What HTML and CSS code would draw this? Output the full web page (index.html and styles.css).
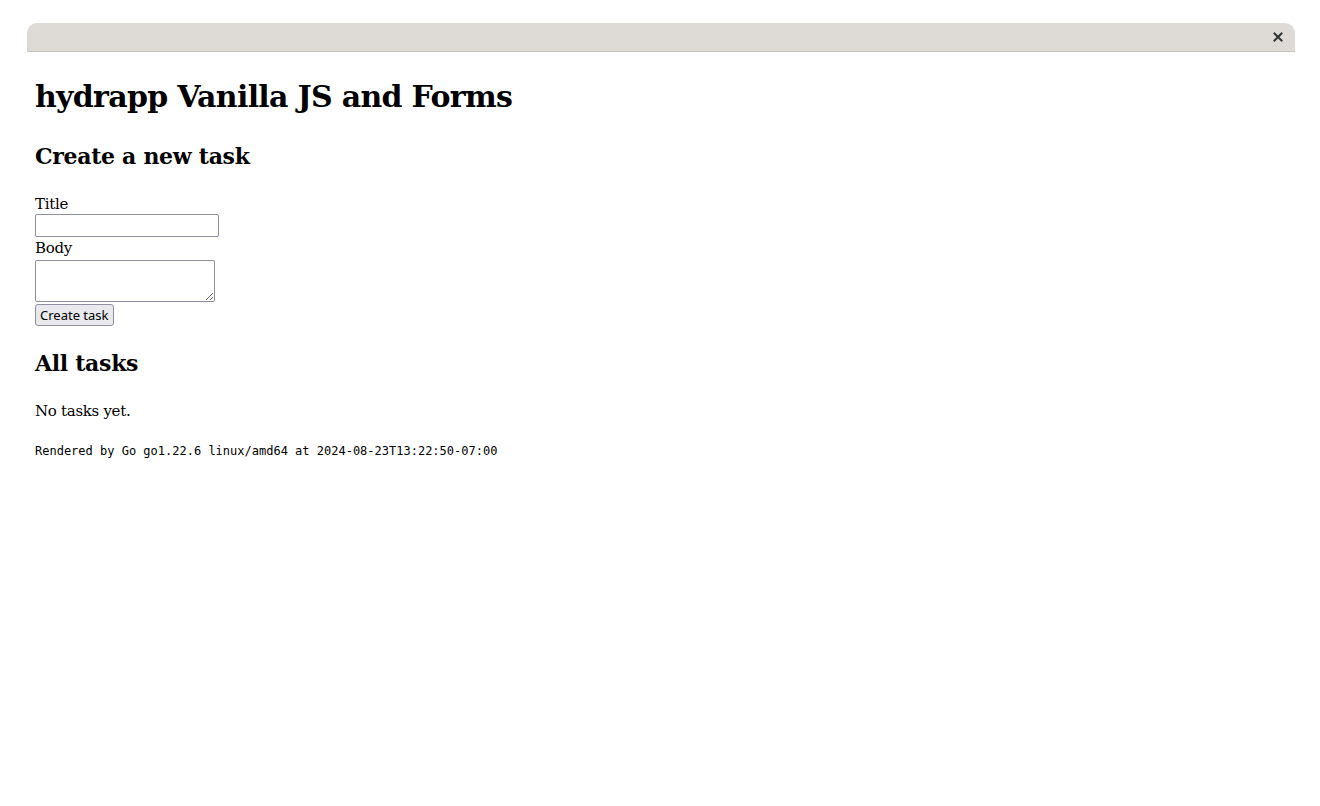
FILE: index.html
```html
<!DOCTYPE html>
<html lang="en">
<head>
<meta charset="utf-8">
<title>hydrapp Vanilla JS and Forms</title>
<link rel="stylesheet" href="styles.css">
</head>
<body>
<div class="window">
  <div class="titlebar">
    <button class="close" aria-label="Close">
      <svg width="10" height="10" viewBox="0 0 10 10"><path d="M1.5 1.5 L8.5 8.5 M8.5 1.5 L1.5 8.5" stroke="#2e3436" stroke-width="2" stroke-linecap="square"/></svg>
    </button>
  </div>
  <main class="content">
    <h1 class="title">hydrapp Vanilla JS and Forms</h1>
    <h2 class="section">Create a new task</h2>
    <form class="task-form">
      <label class="field-label" for="title">Title</label>
      <input class="field-input" id="title" type="text">
      <label class="field-label" for="body">Body</label>
      <textarea class="field-area" id="body"></textarea>
      <button class="submit" type="submit">Create task</button>
    </form>
    <h2 class="section">All tasks</h2>
    <p class="empty">No tasks yet.</p>
    <small class="footer">Rendered by Go go1.22.6 linux/amd64 at 2024-08-23T13:22:50-07:00</small>
  </main>
</div>
</body>
</html>
```
FILE: styles.css
```css
html, body {
  margin: 0;
  padding: 0;
  background: #ffffff;
}
body {
  font-family: "DejaVu Serif", serif;
  color: #000;
}
.window {
  margin: 23px 25px 0 27px;
}
.titlebar {
  height: 28px;
  background: #dedbd7;
  border-bottom: 1px solid #c6c2bd;
  border-radius: 10px 10px 0 0;
  display: flex;
  justify-content: flex-end;
  align-items: center;
  padding-right: 11px;
}
.close {
  width: 12px;
  height: 12px;
  padding: 0;
  border: 0;
  background: transparent;
  display: flex;
  align-items: center;
  justify-content: center;
}
.content {
  padding: 23px 8px 8px 8px;
}
.title {
  font-size: 30px;
  letter-spacing: -0.7px;
  font-weight: bold;
  line-height: 44px;
  margin: 0 0 21px 0;
}
.section {
  font-size: 22px;
  letter-spacing: -0.3px;
  font-weight: bold;
  line-height: 33px;
  margin: 0 0 20px 0;
}
.task-form {
  display: flex;
  flex-direction: column;
  align-items: flex-start;
  margin-bottom: 21px;
}
.field-label {
  font-size: 15px;
  letter-spacing: -0.3px;
  line-height: 22px;
}
.field-input {
  width: 184px;
  height: 23px;
  box-sizing: border-box;
  border: 1px solid #8f8f9d;
  border-radius: 2px;
  margin: -1px 0 0 0;
}
.field-area {
  width: 180px;
  height: 42px;
  box-sizing: border-box;
  border: 1px solid #8f8f9d;
  border-radius: 2px;
  margin: 1px 0 0 0;
}
.submit {
  margin-top: 2px;
  font-family: "Noto Sans", sans-serif;
  font-size: 13px;
  height: 22px;
  padding: 0 4px;
  border: 1px solid #8f8f9d;
  border-radius: 3px;
  background: #e9e9ed;
  color: #000;
}
.empty {
  font-size: 15px;
  letter-spacing: -0.3px;
  line-height: 22px;
  margin: 17px 0 20px 0;
}
.footer {
  display: block;
  font-family: "DejaVu Sans Mono", monospace;
  font-size: 12px;
  line-height: 18px;
}
```
